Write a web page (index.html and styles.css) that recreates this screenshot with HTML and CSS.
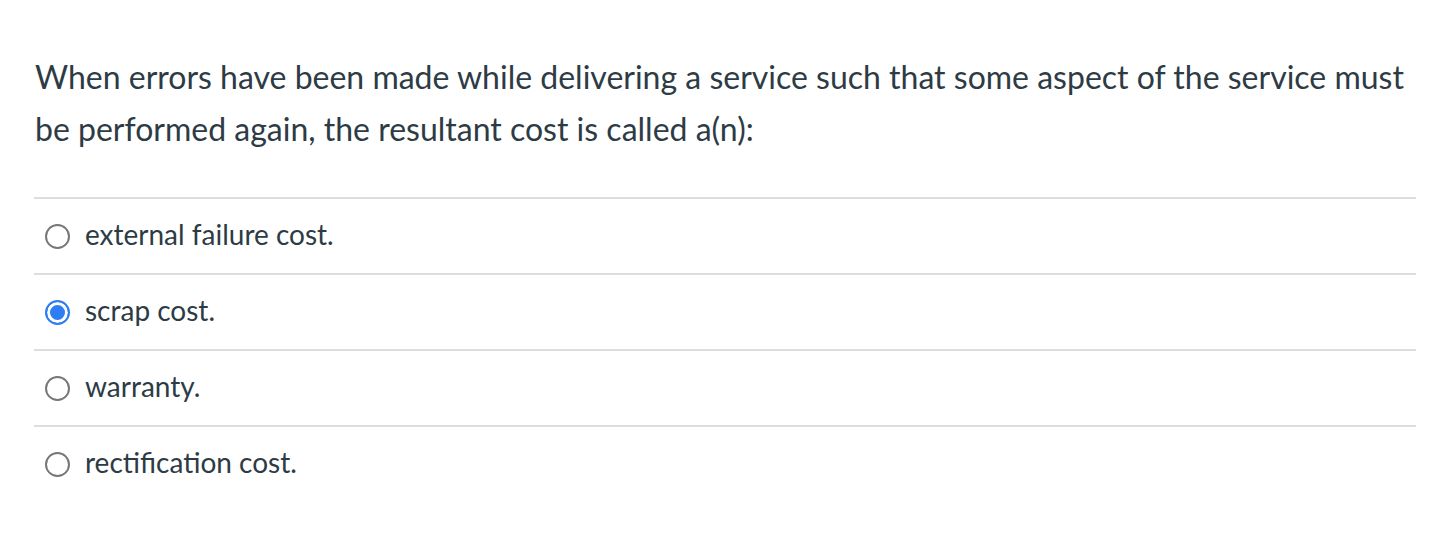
FILE: index.html
```html
<!DOCTYPE html>
<html>
<head>
<meta charset="utf-8">
<link rel="stylesheet" href="styles.css">
</head>
<body>
<div class="quiz">
  <div class="question">When errors have been made while delivering a service such that some aspect of the service must be performed again, the resultant cost is called a(n):</div>
  <div class="answers">
    <label class="answer"><span class="radio"></span><span class="label">external failure cost.</span></label>
    <label class="answer"><span class="radio checked"></span><span class="label">scrap cost.</span></label>
    <label class="answer"><span class="radio"></span><span class="label">warranty.</span></label>
    <label class="answer last"><span class="radio"></span><span class="label">rectification cost.</span></label>
  </div>
</div>
</body>
</html>
```
FILE: styles.css
```css
html, body {
  margin: 0;
  padding: 0;
  background: #ffffff;
}
body {
  font-family: Lato, "Liberation Sans", sans-serif;
  color: #2d3b45;
}
.quiz {
  width: 1382px;
  padding: 51px 0 0 34px;
}
.question {
  font-size: 32px;
  line-height: 52px;
  padding-left: 1px;
  margin-bottom: 42px;
}
.answers {
  border-top: 2px solid #dddddd;
}
.answer {
  display: flex;
  align-items: center;
  height: 74px;
  border-bottom: 2px solid #dddddd;
  padding-left: 11px;
}
.answer.last {
  border-bottom: none;
}
.radio {
  width: 25px;
  height: 25px;
  border: 2px solid #777777;
  border-radius: 50%;
  box-sizing: border-box;
  margin-right: 15px;
  flex: none;
}
.radio.checked {
  border: 2px solid #2f7df2;
  background: #2f7df2;
  box-shadow: inset 0 0 0 3px #ffffff;
}
.label {
  font-size: 28px;
  margin-bottom: 4px;
}
```
